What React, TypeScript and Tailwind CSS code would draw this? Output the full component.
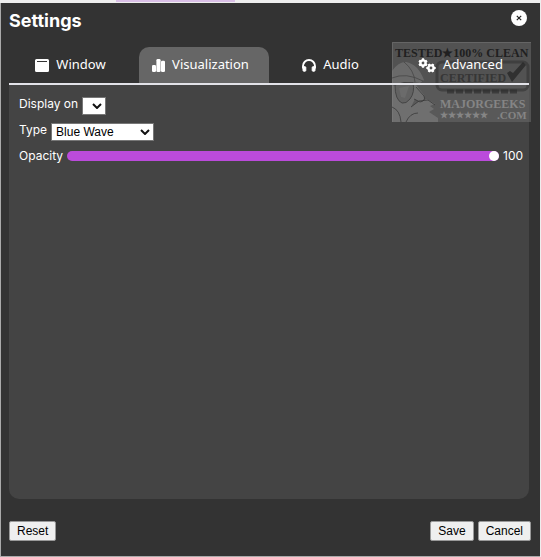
import { useState } from "react";
import type { ReactNode } from "react";

function WindowIcon() {
    return (
        <svg viewBox="0 0 14 13" className="h-[13px] w-[14px]" fill="currentColor" aria-hidden="true">
            <path fillRule="evenodd" d="M1.5 0h11A1.5 1.5 0 0 1 14 1.5v10a1.5 1.5 0 0 1-1.5 1.5h-11A1.5 1.5 0 0 1 0 11.5v-10A1.5 1.5 0 0 1 1.5 0zM2 2v1h10V2z" />
        </svg>
    );
}

function ChartIcon() {
    return (
        <svg viewBox="0 0 13 13" className="size-[13px]" fill="currentColor" aria-hidden="true">
            <rect x="0" y="6" width="4" height="7" rx="1.2" />
            <rect x="4.4" y="0" width="4.2" height="13" rx="1.3" />
            <rect x="9" y="1.8" width="4" height="11.2" rx="1.2" />
        </svg>
    );
}

function HeadphonesIcon() {
    return (
        <svg viewBox="0 0 14 13" className="h-[13px] w-[14px]" fill="none" stroke="currentColor" aria-hidden="true">
            <path d="M1 9.5V7a6 6 0 0 1 12 0v2.5" strokeWidth="1.9" />
            <rect x="1" y="7.7" width="2.8" height="4.5" rx=".8" fill="currentColor" />
            <rect x="10.2" y="7.7" width="2.8" height="4.5" rx=".8" fill="currentColor" />
        </svg>
    );
}

function GearsIcon() {
    return (
        <svg viewBox="0 0 18 15" className="h-[15px] w-[18px]" fill="none" stroke="currentColor" aria-hidden="true">
            <circle cx="5" cy="5" r="2.6" strokeWidth="2.4" />
            <path d="M5 .3v2M5 7.700v2M1 2.700l1.700 1M7.300 6.300l1.700 1M1 7.300l1.700-1M7.300 3.700l1.700-1" strokeWidth="2.2" />
            <circle cx="13" cy="10" r="2.6" strokeWidth="2.4" />
            <path d="M8.300 10h2M15.700 10h2M10.700 6l1 1.700M14.300 12.300l1 1.700M15.300 6l-1 1.700M11.700 12.300l-1 1.700" strokeWidth="2.2" />
        </svg>
    );
}

function CertifiedBadge() {
    return (
        <svg
            viewBox="0 0 139 80"
            className="pointer-events-none absolute top-[39px] right-[9px] h-20 w-[139px]"
            fontFamily="'Liberation Serif', serif"
            fontWeight="bold"
            aria-hidden="true"
        >
            <rect width="139" height="80" fill="#6b6b6b" opacity=".55" />
            <path d="M.5 80V.5H139" fill="none" stroke="#777" opacity=".5" />
            {/* helmet, glasses and face */}
            <path d="M0 29Q6 20 14 20q12 2 18 18l-4 3Q14 38 0 44z" fill="#7c7c7c" opacity=".6" />
            <path d="M12 20q10 8 11 20M0 36q14-6 31 3" fill="none" stroke="#3a3a3a" opacity=".6" />
            <path d="M0 44l24-1 8 10q2 5-4 7l-5-3-4 8 8-6 8-2 8 5-5 2 4 3-5 3 9 6v4H0z" fill="#858585" opacity=".5" />
            <path d="M3 43q9-4 18-2 2 9-3 16-4 5-8 4-7-3-7-18z" fill="#606060" stroke="#3a3a3a" opacity=".8" />
            <path d="M7 46l10-2-4 12-4-1z" fill="#888" opacity=".25" />
            <path d="M24 45l8 9q2 5-4 6l-6-3M19 65l8-6 9-1 7 5M14 80q4-9 12-9M0 65q8 3 9 15" fill="none" stroke="#333" opacity=".7" />
            <rect x="45" y="20" width="91" height="28" rx="5" fill="none" stroke="#333" strokeWidth="3" opacity=".6" />
            <path d="M115 31l5 9 14-17-3-3-10 11-3-2z" fill="#222" opacity=".7" />
            <path d="M55 49.5h72" stroke="#2a2a2a" strokeWidth="4" strokeDasharray="7 2" opacity=".6" />
            <g fill="#202020">
                <text x="3" y="15" fontSize="12">TESTED★100% CLEAN</text>
                <text x="48" y="40" fontSize="12" opacity=".55">CERTIFIED</text>
            </g>
            <g fill="#858585">
                <text x="48" y="66" fontSize="12">MAJORGEEKS</text>
                <text x="48" y="76" fontSize="9">★★★★★★</text>
                <text x="105" y="77" fontSize="11">.COM</text>
            </g>
        </svg>
    );
}

const tabs: { name: string; icon: ReactNode }[] = [
    { name: "Window", icon: <WindowIcon /> },
    { name: "Visualization", icon: <ChartIcon /> },
    { name: "Audio", icon: <HeadphonesIcon /> },
    { name: "Advanced", icon: <GearsIcon /> },
];

function DropDown({ id, options, width }: { id: string; options: string[]; width: string }) {
    return (
        <div className={`relative mt-0.5 h-[18px] ${width}`}>
            <select
                id={id}
                className="block h-full w-full appearance-none border border-[#777] bg-white pl-1 font-['Liberation_Sans',sans-serif] text-xs leading-4 text-black"
            >
                {options.map((option) => (
                    <option key={option}>{option}</option>
                ))}
            </select>
            <svg viewBox="0 0 10 6" className="pointer-events-none absolute top-1.5 right-1 h-1.5 w-2.5" fill="none" stroke="#111" strokeWidth="2" aria-hidden="true">
                <path d="M1 1l4 4 4-4" />
            </svg>
        </div>
    );
}

function FooterButton({ children, className = "" }: { children: ReactNode; className?: string }) {
    return (
        <button className={`h-5 rounded-xs border border-[#999] bg-[#efefef] px-[7px] font-['Liberation_Sans',sans-serif] ${className}`}>
            {children}
        </button>
    );
}

export default function App() {
    const [active, setActive] = useState("Visualization");
    const [opacity, setOpacity] = useState(100);

    return (
        <div className="flex h-screen flex-col bg-[#eee] pr-px font-['Inter',sans-serif] text-xs text-white">
            <div className="flex h-[3px] shrink-0">
                <div className="ml-[21.5%] h-0.5 w-[22%] bg-[#d9bfe6]" />
            </div>
            <main className="relative flex flex-1 flex-col border-b border-l border-[#aaa] bg-[#333] pr-[11px] pb-[15px] pl-2">
                <header className="flex h-11 items-start justify-between pt-1">
                    <h1 className="text-lg leading-7 font-bold">Settings</h1>
                    <button aria-label="Close" className="mt-[3px] mr-0.5 flex size-4 items-center justify-center rounded-full bg-white text-[#222]">
                        <svg viewBox="0 0 6 6" className="size-1.5" stroke="currentColor" strokeWidth="1.2" aria-hidden="true">
                            <path d="M.8.8l4.400 4.400M5.200.8L.8 5.200" />
                        </svg>
                    </button>
                </header>

                <nav className="relative z-10 flex border-b-2 border-[#e2e2e8]">
                    {tabs.map((tab) => (
                        <button
                            key={tab.name}
                            onClick={() => setActive(tab.name)}
                            className={`flex h-9 flex-1 items-center justify-center gap-[7px] rounded-t-[10px] pr-[7px] font-['Noto_Sans',sans-serif] text-[13px] ${active === tab.name ? "bg-[#666]" : ""}`}
                        >
                            {tab.icon}
                            {tab.name}
                        </button>
                    ))}
                </nav>

                <section className="flex-1 rounded-b-[10px] bg-[#444] pt-2.5 pr-1.5 pl-2.5">
                    <div className="flex h-[26px] items-start gap-1">
                        <label htmlFor="display" className="leading-[18px]">Display on</label>
                        <DropDown id="display" options={[]} width="w-6" />
                    </div>
                    <div className="flex h-[26px] items-start gap-1">
                        <label htmlFor="type" className="leading-[18px]">Type</label>
                        <DropDown id="type" options={["Blue Wave"]} width="w-[103px]" />
                    </div>
                    <div className="flex h-[18px] items-center gap-1">
                        <label htmlFor="opacity">Opacity</label>
                        <input
                            id="opacity"
                            type="range"
                            min={0}
                            max={100}
                            value={opacity}
                            onChange={(e) => setOpacity(Number(e.target.value))}
                            className="h-2.5 min-w-0 flex-1 appearance-none rounded-full bg-[#bb4bdb] [&::-webkit-slider-thumb]:size-2.5 [&::-webkit-slider-thumb]:appearance-none [&::-webkit-slider-thumb]:rounded-full [&::-webkit-slider-thumb]:bg-white"
                        />
                        <output htmlFor="opacity" className="w-5">{opacity}</output>
                    </div>
                </section>

                <footer className="mt-[22px] -mr-0.5 flex gap-1 text-black">
                    <FooterButton className="mr-auto">Reset</FooterButton>
                    <FooterButton>Save</FooterButton>
                    <FooterButton>Cancel</FooterButton>
                </footer>

                <CertifiedBadge />
            </main>
        </div>
    );
}
